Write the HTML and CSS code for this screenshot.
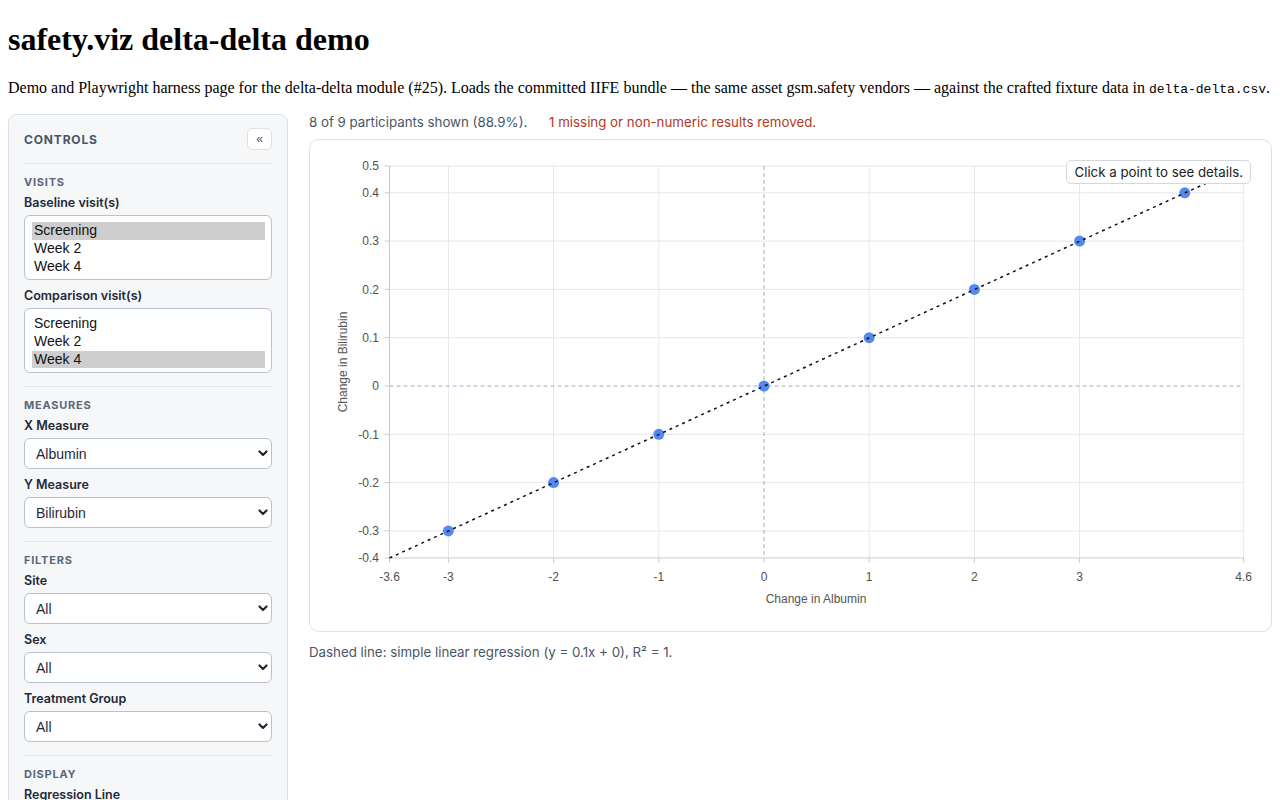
FILE: index.html
```html
<!DOCTYPE html>
<html lang="en">
<head>
    <meta charset="UTF-8">
    <meta name="viewport" content="width=device-width, initial-scale=1.0">
    <title>safety.viz delta-delta demo</title>
    <link rel="stylesheet" href="styles.css">
</head>
<body>
    <h1>safety.viz delta-delta demo</h1>
    <p class="intro">Demo and Playwright harness page for the delta-delta module (#25). Loads the committed IIFE bundle — the same asset gsm.safety vendors — against the crafted fixture data in <code>delta-delta.csv</code>.</p>

    <div class="layout">
        <aside class="controls">
            <div class="controls-header">
                <span class="controls-title">Controls</span>
                <button class="collapse-btn" type="button" title="Collapse">&laquo;</button>
            </div>

            <section class="control-section">
                <h3 class="section-title">Visits</h3>
                <div class="field">
                    <label for="baseline">Baseline visit(s)</label>
                    <select id="baseline" class="listbox" multiple size="3">
                        <option selected>Screening</option>
                        <option>Week 2</option>
                        <option>Week 4</option>
                    </select>
                </div>
                <div class="field">
                    <label for="comparison">Comparison visit(s)</label>
                    <select id="comparison" class="listbox" multiple size="3">
                        <option>Screening</option>
                        <option>Week 2</option>
                        <option selected>Week 4</option>
                    </select>
                </div>
            </section>

            <section class="control-section">
                <h3 class="section-title">Measures</h3>
                <div class="field">
                    <label for="xMeasure">X Measure</label>
                    <div class="select-wrap">
                        <select id="xMeasure" class="dropdown">
                            <option>Albumin</option>
                            <option>Bilirubin</option>
                        </select>
                        <svg class="chevron" width="10" height="7" viewBox="0 0 10 7"><path d="M1.5 1.5L5 5l3.5-3.5" fill="none" stroke="#1f2937" stroke-width="2.2" stroke-linecap="round" stroke-linejoin="round"/></svg>
                    </div>
                </div>
                <div class="field">
                    <label for="yMeasure">Y Measure</label>
                    <div class="select-wrap">
                        <select id="yMeasure" class="dropdown">
                            <option>Bilirubin</option>
                            <option>Albumin</option>
                        </select>
                        <svg class="chevron" width="10" height="7" viewBox="0 0 10 7"><path d="M1.5 1.5L5 5l3.5-3.5" fill="none" stroke="#1f2937" stroke-width="2.2" stroke-linecap="round" stroke-linejoin="round"/></svg>
                    </div>
                </div>
            </section>

            <section class="control-section">
                <h3 class="section-title">Filters</h3>
                <div class="field">
                    <label for="site">Site</label>
                    <div class="select-wrap">
                        <select id="site" class="dropdown"><option>All</option></select>
                        <svg class="chevron" width="10" height="7" viewBox="0 0 10 7"><path d="M1.5 1.5L5 5l3.5-3.5" fill="none" stroke="#1f2937" stroke-width="2.2" stroke-linecap="round" stroke-linejoin="round"/></svg>
                    </div>
                </div>
                <div class="field">
                    <label for="sex">Sex</label>
                    <div class="select-wrap">
                        <select id="sex" class="dropdown"><option>All</option></select>
                        <svg class="chevron" width="10" height="7" viewBox="0 0 10 7"><path d="M1.5 1.5L5 5l3.5-3.5" fill="none" stroke="#1f2937" stroke-width="2.2" stroke-linecap="round" stroke-linejoin="round"/></svg>
                    </div>
                </div>
                <div class="field">
                    <label for="treatment">Treatment Group</label>
                    <div class="select-wrap">
                        <select id="treatment" class="dropdown"><option>All</option></select>
                        <svg class="chevron" width="10" height="7" viewBox="0 0 10 7"><path d="M1.5 1.5L5 5l3.5-3.5" fill="none" stroke="#1f2937" stroke-width="2.2" stroke-linecap="round" stroke-linejoin="round"/></svg>
                    </div>
                </div>
            </section>

            <section class="control-section">
                <h3 class="section-title">Display</h3>
                <div class="field">
                    <label for="regression">Regression Line</label>
                    <div class="select-wrap">
                        <select id="regression" class="dropdown"><option>Show</option><option>Hide</option></select>
                        <svg class="chevron" width="10" height="7" viewBox="0 0 10 7"><path d="M1.5 1.5L5 5l3.5-3.5" fill="none" stroke="#1f2937" stroke-width="2.2" stroke-linecap="round" stroke-linejoin="round"/></svg>
                    </div>
                </div>
            </section>
        </aside>

        <main class="chart-panel">
            <div class="status">
                <span>8 of 9 participants shown (88.9%).</span>
                <span class="status-warning">1 missing or non-numeric results removed.</span>
            </div>

            <div class="chart-card">
                <svg class="chart" width="960" height="491" viewBox="0 0 960 491">
                    <!-- grid -->
                    <g class="grid">
                        <line x1="79.5" x2="933.7" y1="26" y2="26"/>
                        <line x1="79.5" x2="933.7" y1="52.8" y2="52.8"/>
                        <line x1="79.5" x2="933.7" y1="101.1" y2="101.1"/>
                        <line x1="79.5" x2="933.7" y1="149.4" y2="149.4"/>
                        <line x1="79.5" x2="933.7" y1="197.7" y2="197.7"/>
                        <line x1="79.5" x2="933.7" y1="294.3" y2="294.3"/>
                        <line x1="79.5" x2="933.7" y1="342.6" y2="342.6"/>
                        <line x1="79.5" x2="933.7" y1="390.9" y2="390.9"/>
                        <line x1="138.4" x2="138.4" y1="26" y2="418"/>
                        <line x1="243.6" x2="243.6" y1="26" y2="418"/>
                        <line x1="348.8" x2="348.8" y1="26" y2="418"/>
                        <line x1="559.2" x2="559.2" y1="26" y2="418"/>
                        <line x1="664.4" x2="664.4" y1="26" y2="418"/>
                        <line x1="769.6" x2="769.6" y1="26" y2="418"/>
                        <line x1="933.7" x2="933.7" y1="26" y2="418"/>
                    </g>

                    <!-- zero reference lines -->
                    <g class="zero-line">
                        <line x1="79.5" x2="933.7" y1="246" y2="246"/>
                        <line x1="454" x2="454" y1="26" y2="418"/>
                    </g>

                    <!-- axes -->
                    <g class="axis">
                        <line x1="79.5" x2="79.5" y1="26" y2="418"/>
                        <line x1="79.5" x2="933.7" y1="418" y2="418"/>
                        <line x1="74.5" x2="79.5" y1="26" y2="26"/>
                        <line x1="74.5" x2="79.5" y1="52.8" y2="52.8"/>
                        <line x1="74.5" x2="79.5" y1="101.1" y2="101.1"/>
                        <line x1="74.5" x2="79.5" y1="149.4" y2="149.4"/>
                        <line x1="74.5" x2="79.5" y1="197.7" y2="197.7"/>
                        <line x1="74.5" x2="79.5" y1="246" y2="246"/>
                        <line x1="74.5" x2="79.5" y1="294.3" y2="294.3"/>
                        <line x1="74.5" x2="79.5" y1="342.6" y2="342.6"/>
                        <line x1="74.5" x2="79.5" y1="390.9" y2="390.9"/>
                        <line x1="74.5" x2="79.5" y1="418" y2="418"/>
                        <line x1="79.5" x2="79.5" y1="418" y2="423"/>
                        <line x1="138.4" x2="138.4" y1="418" y2="423"/>
                        <line x1="243.6" x2="243.6" y1="418" y2="423"/>
                        <line x1="348.8" x2="348.8" y1="418" y2="423"/>
                        <line x1="454" x2="454" y1="418" y2="423"/>
                        <line x1="559.2" x2="559.2" y1="418" y2="423"/>
                        <line x1="664.4" x2="664.4" y1="418" y2="423"/>
                        <line x1="769.6" x2="769.6" y1="418" y2="423"/>
                        <line x1="933.7" x2="933.7" y1="418" y2="423"/>
                    </g>

                    <g class="tick-labels y-ticks">
                        <text x="69" y="30">0.5</text>
                        <text x="69" y="57">0.4</text>
                        <text x="69" y="105.3">0.3</text>
                        <text x="69" y="153.6">0.2</text>
                        <text x="69" y="201.9">0.1</text>
                        <text x="69" y="250.2">0</text>
                        <text x="69" y="298.5">-0.1</text>
                        <text x="69" y="346.8">-0.2</text>
                        <text x="69" y="395.1">-0.3</text>
                        <text x="69" y="422">-0.4</text>
                    </g>

                    <g class="tick-labels x-ticks">
                        <text x="79.5" y="441">-3.6</text>
                        <text x="138.4" y="441">-3</text>
                        <text x="243.6" y="441">-2</text>
                        <text x="348.8" y="441">-1</text>
                        <text x="454" y="441">0</text>
                        <text x="559.2" y="441">1</text>
                        <text x="664.4" y="441">2</text>
                        <text x="769.6" y="441">3</text>
                        <text x="933.7" y="441">4.6</text>
                    </g>

                    <text class="axis-title" x="506" y="463" text-anchor="middle">Change in Albumin</text>
                    <text class="axis-title" transform="translate(37 222) rotate(-90)" text-anchor="middle">Change in Bilirubin</text>

                    <!-- points -->
                    <g class="points">
                        <circle cx="138.4" cy="390.9" r="5.5"/>
                        <circle cx="243.6" cy="342.6" r="5.5"/>
                        <circle cx="348.8" cy="294.3" r="5.5"/>
                        <circle cx="454" cy="246" r="5.5"/>
                        <circle cx="559.2" cy="197.7" r="5.5"/>
                        <circle cx="664.4" cy="149.4" r="5.5"/>
                        <circle cx="769.6" cy="101.1" r="5.5"/>
                        <circle cx="874.8" cy="52.8" r="5.5"/>
                    </g>

                    <!-- regression line y = 0.1x + 0 -->
                    <line class="regression" x1="79.5" y1="418" x2="933.7" y2="26"/>
                </svg>

                <div class="chart-hint">Click a point to see details.</div>
            </div>

            <p class="caption">Dashed line: simple linear regression (y = 0.1x + 0), R² = 1.</p>
        </main>
    </div>
</body>
</html>
```

FILE: styles.css
```css
body {
    margin: 8px;
    font-family: "Liberation Serif", "Times New Roman", serif;
    color: #000;
    background: #fff;
}
h1 {
    font-size: 32px;
    font-weight: bold;
    margin: 13px 0 21px;
}
.intro {
    font-size: 16px;
    margin: 0 0 17px;
}
.intro code {
    font-family: "Liberation Mono", "Courier New", monospace;
    font-size: 13px;
}

.layout {
    display: flex;
    align-items: flex-start;
    gap: 21px;
    font-family: Inter, "Liberation Sans", Arial, sans-serif;
}

/* sidebar */
.controls {
    width: 280px;
    flex: none;
    box-sizing: border-box;
    padding: 13px 15px 20px;
    background: #f6f7f9;
    border: 1px solid #dde1e7;
    border-radius: 8px;
}
.controls-header {
    display: flex;
    align-items: center;
    justify-content: space-between;
    padding-bottom: 13px;
}
.controls-title {
    font-size: 12px;
    font-weight: 700;
    text-transform: uppercase;
    letter-spacing: 0.07em;
    color: #4a5565;
}
.collapse-btn {
    width: 25px;
    height: 22px;
    padding: 0;
    font-family: "Liberation Sans", Arial, sans-serif;
    font-size: 12px;
    line-height: 1;
    color: #4a5565;
    background: #fff;
    border: 1px solid #dde1e7;
    border-radius: 5px;
    cursor: pointer;
}
.control-section {
    display: flex;
    flex-direction: column;
    gap: 9px;
    border-top: 1px solid #e1e5ea;
    padding: 11px 0 13px;
}
.section-title {
    margin: 0 0 -2px;
    font-size: 11px;
    line-height: 14px;
    font-weight: 700;
    text-transform: uppercase;
    letter-spacing: 0.07em;
    color: #5b6778;
}
.field {
    display: flex;
    flex-direction: column;
    gap: 5px;
}
.field label {
    font-size: 12.5px;
    line-height: 14px;
    font-weight: 600;
    color: #1f2937;
}
.listbox {
    box-sizing: border-box;
    height: 65px;
    padding: 6px 6px 6px 7px;
    font-family: "Liberation Sans", Arial, sans-serif;
    font-size: 14px;
    color: #111;
    background: #fff;
    border: 1px solid #b9c1cc;
    border-radius: 6px;
    overflow: hidden;
    outline: none;
}
.listbox option {
    padding: 0 2px 1px;
    line-height: 16px;
}
.listbox option:checked {
    background: #cecece;
    color: #111;
}
.select-wrap {
    position: relative;
}
.dropdown {
    display: block;
    width: 100%;
    height: 31px;
    box-sizing: border-box;
    padding: 0 28px 0 11px;
    font-family: "Liberation Sans", Arial, sans-serif;
    font-size: 14px;
    color: #1f2937;
    background: #fff;
    border: 1px solid #b9c1cc;
    border-radius: 6px;
    appearance: none;
    -webkit-appearance: none;
}
.chevron {
    position: absolute;
    right: 4px;
    top: 12px;
    pointer-events: none;
}

/* chart */
.chart-panel {
    flex: 1;
    min-width: 0;
}
.status {
    font-size: 13.3px;
    line-height: 16px;
    color: #4a5565;
    margin-bottom: 9px;
}
.status-warning {
    color: #b03a1f;
    margin-left: 18px;
}
.chart-card {
    position: relative;
    background: #fff;
    border: 1px solid #dde1e7;
    border-radius: 10px;
    height: 491px;
}
.chart {
    display: block;
}
.grid line {
    stroke: #e4e7ed;
    stroke-width: 1;
}
.zero-line line {
    stroke: #9fb0c3;
    stroke-width: 1;
    stroke-dasharray: 4 3;
}
.axis line {
    stroke: #c6cbd3;
    stroke-width: 1;
}
.tick-labels text {
    font-family: "Liberation Sans", Arial, sans-serif;
    font-size: 12px;
    fill: #505050;
}
.y-ticks text {
    text-anchor: end;
}
.x-ticks text {
    text-anchor: middle;
}
.axis-title {
    font-family: "Liberation Sans", Arial, sans-serif;
    font-size: 12px;
    fill: #555;
}
.points circle {
    fill: #5589f0;
}
.regression {
    stroke: #111;
    stroke-width: 1.5;
    stroke-dasharray: 3 4;
}
.chart-hint {
    position: absolute;
    top: 20px;
    right: 20px;
    padding: 4px 7px;
    font-size: 13.3px;
    line-height: 14px;
    color: #222;
    background: #fff;
    border: 1px solid #d3d8df;
    border-radius: 5px;
}
.caption {
    margin: 12px 0 0;
    font-size: 13.3px;
    line-height: 16px;
    color: #4a5565;
}
```
